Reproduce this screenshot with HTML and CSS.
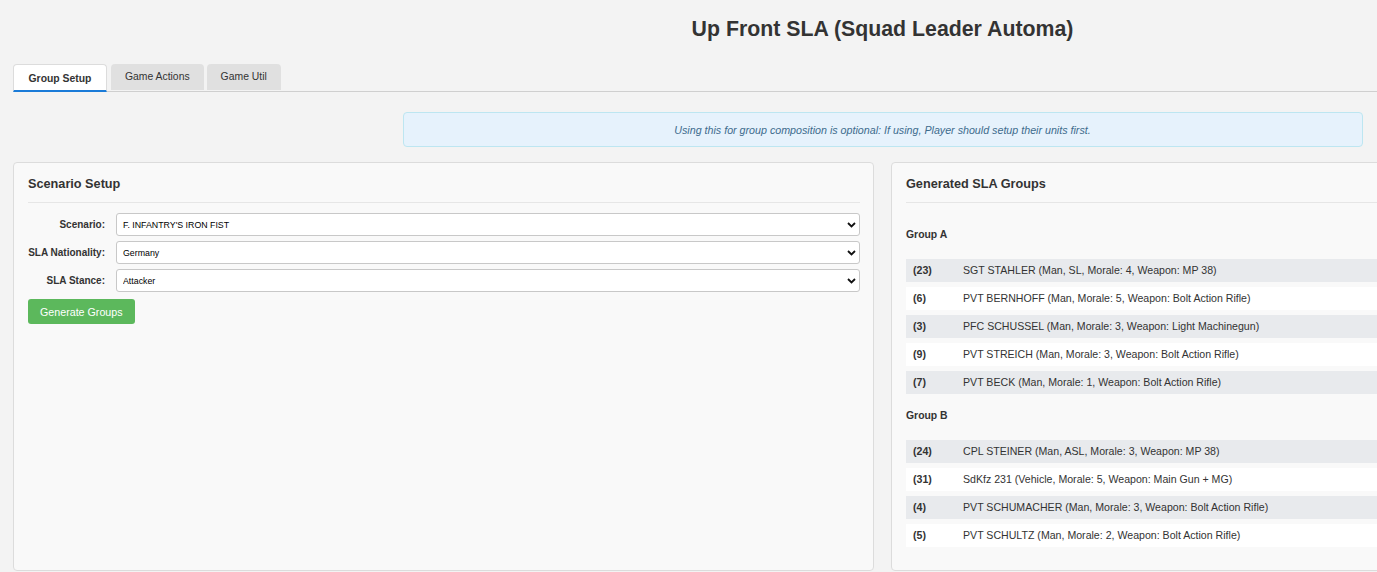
FILE: index.html
```html
<!DOCTYPE html>
<html lang="en">
<head>
<meta charset="utf-8">
<title>Up Front SLA (Squad Leader Automa)</title>
<link rel="stylesheet" href="styles.css">
</head>
<body>
<div class="page">
  <h1 class="app-title">Up Front SLA (Squad Leader Automa)</h1>
  <nav class="tabs">
    <div class="tab active">Group Setup</div>
    <div class="tab">Game Actions</div>
    <div class="tab">Game Util</div>
  </nav>
  <div class="info">Using this for group composition is optional: If using, Player should setup their units first.</div>
  <div class="columns">
    <section class="panel">
      <h2 class="panel-title">Scenario Setup</h2>
      <form class="setup-form">
        <label class="field-label" for="scenario">Scenario:</label>
        <select id="scenario" class="field-select"><option>F. INFANTRY'S IRON FIST</option></select>
        <label class="field-label" for="nation">SLA Nationality:</label>
        <select id="nation" class="field-select"><option>Germany</option></select>
        <label class="field-label" for="stance">SLA Stance:</label>
        <select id="stance" class="field-select"><option>Attacker</option></select>
      </form>
      <button class="btn-generate" type="button">Generate Groups</button>
    </section>
    <section class="panel">
      <h2 class="panel-title">Generated SLA Groups</h2>
      <div class="group first">
        <h3 class="group-title">Group A</h3>
        <ul class="unit-list">
          <li class="unit"><span class="unit-num">(23)</span><span class="unit-name">SGT STAHLER (Man, SL, Morale: 4, Weapon: MP 38)</span></li>
          <li class="unit"><span class="unit-num">(6)</span><span class="unit-name">PVT BERNHOFF (Man, Morale: 5, Weapon: Bolt Action Rifle)</span></li>
          <li class="unit"><span class="unit-num">(3)</span><span class="unit-name">PFC SCHUSSEL (Man, Morale: 3, Weapon: Light Machinegun)</span></li>
          <li class="unit"><span class="unit-num">(9)</span><span class="unit-name">PVT STREICH (Man, Morale: 3, Weapon: Bolt Action Rifle)</span></li>
          <li class="unit"><span class="unit-num">(7)</span><span class="unit-name">PVT BECK (Man, Morale: 1, Weapon: Bolt Action Rifle)</span></li>
        </ul>
      </div>
      <div class="group">
        <h3 class="group-title">Group B</h3>
        <ul class="unit-list">
          <li class="unit"><span class="unit-num">(24)</span><span class="unit-name">CPL STEINER (Man, ASL, Morale: 3, Weapon: MP 38)</span></li>
          <li class="unit"><span class="unit-num">(31)</span><span class="unit-name">SdKfz 231 (Vehicle, Morale: 5, Weapon: Main Gun + MG)</span></li>
          <li class="unit"><span class="unit-num">(4)</span><span class="unit-name">PVT SCHUMACHER (Man, Morale: 3, Weapon: Bolt Action Rifle)</span></li>
          <li class="unit"><span class="unit-num">(5)</span><span class="unit-name">PVT SCHULTZ (Man, Morale: 2, Weapon: Bolt Action Rifle)</span></li>
        </ul>
      </div>
    </section>
  </div>
</div>
</body>
</html>
```
FILE: styles.css
```css
html, body {
  margin: 0;
  padding: 0;
  overflow: hidden;
  background: #f3f3f3;
}
body {
  font-family: "Liberation Sans", Arial, sans-serif;
  color: #333;
}
.page {
  width: 1739px;
  padding: 0 13px;
}
.app-title {
  margin: 18px 0 0;
  font-size: 21.3px;
  line-height: 22px;
  font-weight: bold;
  text-align: center;
  color: #333;
}
.tabs {
  margin-top: 24px;
  height: 27px;
  display: flex;
  align-items: flex-start;
  gap: 3px;
  border-bottom: 1px solid #cfcfcf;
  width: 1364px;
}
.tab {
  height: 26px;
  box-sizing: border-box;
  padding: 0 14px 1px;
  display: flex;
  align-items: center;
  font-size: 10.4px;
  background: #e0e0e0;
  border-radius: 4px 4px 0 0;
  color: #333;
}
.tab.active {
  height: 28px;
  margin-bottom: -1px;
  margin-right: 1px;
  padding: 1px 14.5px 0;
  background: #fff;
  font-weight: bold;
  border: 1px solid #dcdcdc;
  border-bottom: 2px solid #1a7bd8;
}
.info {
  margin: 20px auto 0;
  width: 960px;
  height: 35px;
  box-sizing: border-box;
  display: flex;
  align-items: center;
  justify-content: center;
  background: #e6f2fc;
  border: 1px solid #bde6f1;
  border-radius: 4px;
  font-size: 10.7px;
  font-style: italic;
  color: #3d6b8c;
}
.columns {
  margin-top: 15px;
  display: grid;
  grid-template-columns: 1fr 1fr;
  column-gap: 17px;
}
.panel {
  background: #f9f9f9;
  border: 1px solid #dcdcdc;
  border-radius: 4px;
  padding: 14px 13px 23px 14px;
}
.panel-title {
  margin: 0;
  font-size: 12.7px;
  line-height: 15px;
  font-weight: bold;
  padding-bottom: 10px;
  border-bottom: 1px solid #e6e6e6;
  color: #333;
}
.setup-form {
  margin-top: 10px;
  display: grid;
  grid-template-columns: 77px 1fr;
  column-gap: 11px;
  row-gap: 5px;
  align-items: center;
}
.field-label {
  text-align: right;
  font-size: 10px;
  font-weight: bold;
  color: #333;
}
.field-select {
  -webkit-appearance: none;
  appearance: none;
  height: 23px;
  margin: 0;
  padding: 0 20px 0 6px;
  border: 1px solid #c8c8c8;
  border-radius: 3px;
  background: #fff url("data:image/svg+xml,%3Csvg xmlns='http://www.w3.org/2000/svg' width='9' height='6' viewBox='0 0 9 6'%3E%3Cpath d='M1 1l3.5 3.5L8 1' fill='none' stroke='%23111' stroke-width='1.8'/%3E%3C/svg%3E") no-repeat right 3px center;
  font-family: "Liberation Sans", Arial, sans-serif;
  font-size: 8.8px;
  color: #000;
}
.btn-generate {
  margin-top: 7px;
  height: 25px;
  padding: 0 12px;
  border: none;
  border-radius: 3px;
  background: #5cb85c;
  color: #fff;
  font-family: "Liberation Sans", Arial, sans-serif;
  font-size: 10.7px;
}
.group {
  margin-top: 16px;
}
.group.first {
  margin-top: 26px;
}
.group-title {
  margin: 0 0 18px;
  font-size: 10.4px;
  line-height: 12px;
  font-weight: bold;
  color: #333;
}
.unit-list {
  list-style: none;
  margin: 0;
  padding: 0;
  display: flex;
  flex-direction: column;
  gap: 5px;
}
.unit {
  height: 23px;
  display: flex;
  align-items: center;
  padding-left: 7px;
  padding-bottom: 1px;
  box-sizing: border-box;
  font-size: 10.6px;
  background: #fff;
  color: #333;
}
.unit:nth-child(odd) {
  background: #e8eaed;
}
.unit-num {
  width: 50px;
  flex: none;
  font-weight: bold;
  color: #333;
}
.unit-name {
  white-space: nowrap;
}
```
